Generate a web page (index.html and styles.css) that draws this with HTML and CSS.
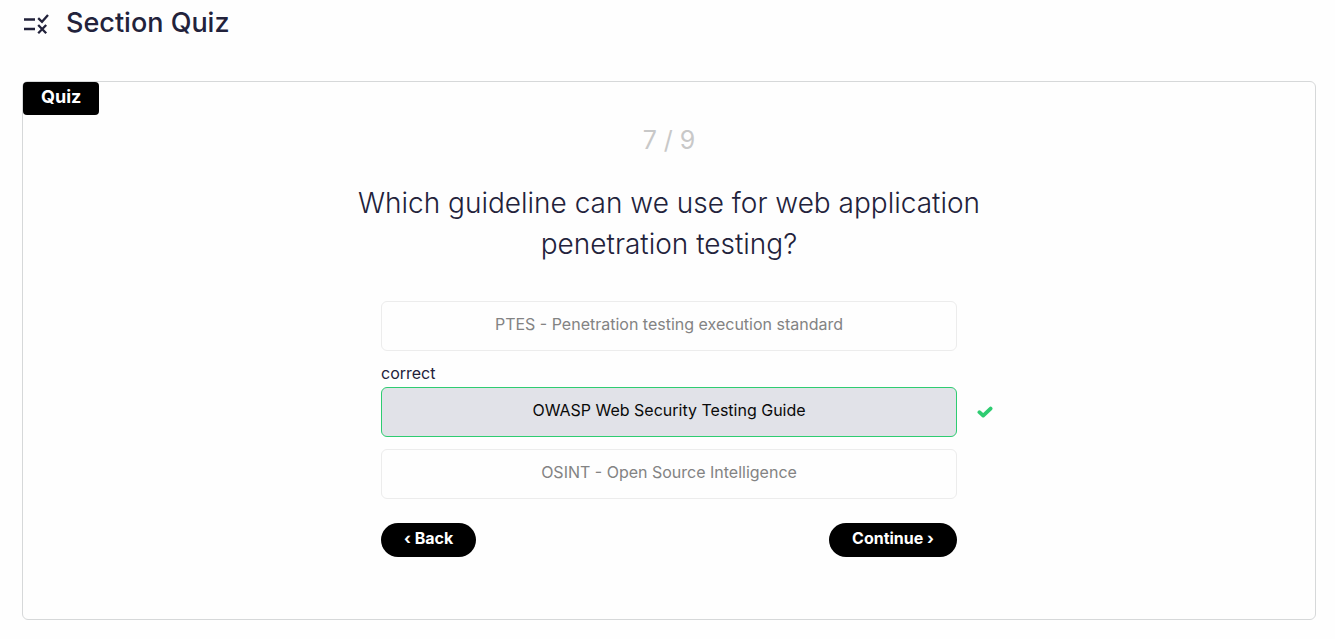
FILE: index.html
```html
<!DOCTYPE html>
<html lang="en">
<head>
<meta charset="utf-8">
<meta name="viewport" content="width=device-width, initial-scale=1">
<title>Section Quiz</title>
<link rel="stylesheet" href="styles.css">
</head>
<body>
<main class="page">
  <header class="page-header">
    <svg class="header-icon" viewBox="0 0 28 24" aria-hidden="true">
      <path d="M2 8.5h11M2 18h11"/>
      <path d="M16.2 7.2l3.8 3.6L26 4"/>
      <path d="M16.2 14l8 8.2M24.2 14l-8 8.2"/>
    </svg>
    <h1 class="page-title">Section Quiz</h1>
  </header>
  <section class="card">
    <span class="card-tag">Quiz</span>
    <p class="progress">7 / 9</p>
    <h2 class="question">Which guideline can we use for web application penetration testing?</h2>
    <div class="answers">
      <button class="answer" type="button">PTES - Penetration testing execution standard</button>
      <div class="answer-group">
        <span class="answer-status" id="status">correct</span>
        <div class="answer-row">
          <button class="answer answer-correct" type="button" aria-describedby="status">OWASP Web Security Testing Guide</button>
          <svg class="check" viewBox="0 0 16 12" aria-hidden="true"><path d="M2.4 6.2l3.8 3.4 7.4-7"/></svg>
        </div>
      </div>
      <button class="answer" type="button">OSINT - Open Source Intelligence</button>
    </div>
    <nav class="actions">
      <button class="pill" type="button">‹ Back</button>
      <button class="pill" type="button">Continue ›</button>
    </nav>
  </section>
</main>
</body>
</html>
```
FILE: styles.css
```css
* {
  box-sizing: border-box;
}

body {
  margin: 0;
  background: #fefefe;
  color: #22223b;
  font-family: Inter, "Liberation Sans", sans-serif;
  font-size: 16px;
  line-height: 24px;
}

h1,
h2,
p {
  margin: 0;
}

button {
  font: inherit;
  cursor: pointer;
}

.page {
  padding: 4px 19px 16px 22px;
}

.page-header {
  display: flex;
  align-items: center;
  gap: 16px;
  margin-bottom: 39px;
}

.header-icon {
  width: 28px;
  height: 24px;
  fill: none;
  stroke: #22223b;
  stroke-width: 2.3;
}

.page-title {
  font-size: 27px;
  line-height: 38px;
  font-weight: 500;
}

.card {
  position: relative;
  padding: 40px 24px 62px;
  border: 1px solid #d6d8d9;
  border-radius: 6px;
}

.card-tag {
  position: absolute;
  top: 0;
  left: 0;
  padding: 3px 18px 6px;
  border-radius: 4px;
  background: #000;
  color: #fff;
  font-size: 18px;
  font-weight: 700;
}

.progress {
  color: #c8c8c8;
  font-size: 25px;
  line-height: 36px;
  text-align: center;
}

.question {
  max-width: 660px;
  margin: 25px auto 36px;
  font-size: 28px;
  line-height: 41px;
  font-weight: 300;
  text-align: center;
}

.answers {
  display: grid;
  gap: 12px;
  max-width: 576px;
  margin: 0 auto 24px;
}

.answer {
  width: 100%;
  padding: 10px 24px 14px;
  border: 1px solid #ececec;
  border-radius: 6px;
  background: transparent;
  color: #838383;
}

.answer-status {
  display: block;
  line-height: 20px;
  padding-bottom: 4px;
}

.answer-row {
  position: relative;
}

.answer-correct {
  display: block;
  border-color: #2ecc71;
  background: #e1e2e8;
  color: #0a0a0a;
}

.check {
  position: absolute;
  top: 19px;
  left: calc(100% + 20px);
  width: 16px;
  height: 12px;
  fill: none;
  stroke: #2ecc71;
  stroke-width: 3.8;
  stroke-linecap: round;
  stroke-linejoin: round;
}

.actions {
  display: flex;
  justify-content: space-between;
  max-width: 576px;
  margin: 0 auto;
}

.pill {
  padding: 3px 23px 7px;
  border: 0;
  border-radius: 17px;
  background: #000;
  color: #fff;
  font-weight: 700;
}
```
